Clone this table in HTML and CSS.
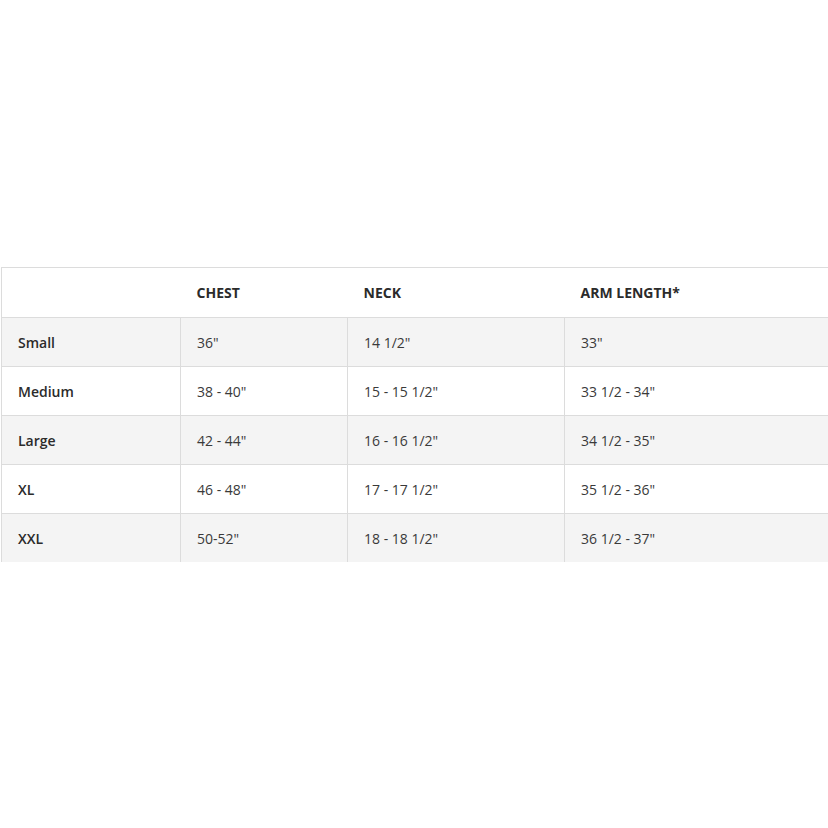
FILE: index.html
```html
<!DOCTYPE html>
<html>
<head>
<meta charset="utf-8">
<link rel="stylesheet" href="styles.css">
</head>
<body>
<div class="page">
<table class="size-table">
  <colgroup>
    <col class="c1"><col class="c2"><col class="c3"><col class="c4">
  </colgroup>
  <thead>
    <tr class="head">
      <th></th><th>CHEST</th><th>NECK</th><th>ARM LENGTH*</th>
    </tr>
  </thead>
  <tbody>
    <tr class="grey"><td class="label">Small</td><td>36"</td><td>14 1/2"</td><td>33"</td></tr>
    <tr><td class="label">Medium</td><td>38 - 40"</td><td>15 - 15 1/2"</td><td>33 1/2 - 34"</td></tr>
    <tr class="grey"><td class="label">Large</td><td>42 - 44"</td><td>16 - 16 1/2"</td><td>34 1/2 - 35"</td></tr>
    <tr><td class="label">XL</td><td>46 - 48"</td><td>17 - 17 1/2"</td><td>35 1/2 - 36"</td></tr>
    <tr class="grey last"><td class="label">XXL</td><td>50-52"</td><td>18 - 18 1/2"</td><td>36 1/2 - 37"</td></tr>
  </tbody>
</table>
</div>
</body>
</html>
```
FILE: styles.css
```css
html, body {
  margin: 0;
  padding: 0;
  background: #ffffff;
}
.page {
  width: 828px;
  height: 828px;
  overflow: hidden;
  padding-top: 267px;
  padding-left: 1px;
  box-sizing: border-box;
}
.size-table {
  border-collapse: collapse;
  table-layout: fixed;
  width: 840px;
  font-family: "Open Sans", "Liberation Sans", sans-serif;
  font-size: 14px;
  color: #3a3a3a;
}
.c1 { width: 179px; }
.c2 { width: 167px; }
.c3 { width: 217px; }
.c4 { width: 277px; }
.size-table th,
.size-table td {
  text-align: left;
  padding: 0 0 0 16px;
  height: 48px;
  border-left: 1px solid #dcdcdc;
  border-bottom: 1px solid #dcdcdc;
  vertical-align: middle;
}
.size-table th {
  font-weight: 700;
  color: #2b2b2b;
  height: 49px;
  border-top: 1px solid #dcdcdc;
  border-left: none;
}
.size-table th:first-child {
  border-left: 1px solid #dcdcdc;
}
.size-table td.label {
  font-weight: 600;
  color: #2b2b2b;
}
.size-table tr.grey td {
  background: #f4f4f4;
}
.size-table tr.last td {
  border-bottom: none;
}
```
